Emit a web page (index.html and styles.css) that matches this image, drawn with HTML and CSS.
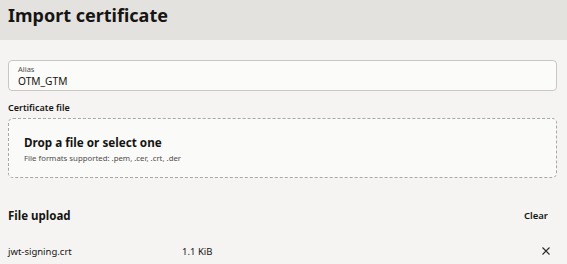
FILE: index.html
```html
<!DOCTYPE html>
<html>
<head>
<meta charset="utf-8">
<link rel="stylesheet" href="styles.css">
</head>
<body>
<header class="header"><h1 class="title">Import certificate</h1></header>
<main class="content">
  <div class="field">
    <div class="field-label">Alias</div>
    <div class="field-value">OTM_GTM</div>
  </div>
  <div class="section-label">Certificate file</div>
  <div class="dropzone">
    <div class="drop-title">Drop a file or select one</div>
    <div class="drop-hint">File formats supported: .pem, .cer, .crt, .der</div>
  </div>
  <div class="upload-head">
    <div class="upload-title">File upload</div>
    <div class="clear">Clear</div>
  </div>
  <div class="file-row">
    <div class="file-name">jwt-signing.crt</div>
    <div class="file-size">1.1 KiB</div>
    <div class="file-remove">
      <svg width="8" height="8" viewBox="0 0 8 8"><path d="M0.5 0.5L7.5 7.5M7.5 0.5L0.5 7.5" stroke="#2a2a2a" stroke-width="1.1" fill="none"/></svg>
    </div>
  </div>
</main>
</body>
</html>
```
FILE: styles.css
```css
html, body { margin: 0; padding: 0; }
body {
  background: #f5f4f2;
  font-family: "Noto Sans", "Open Sans", sans-serif;
  color: #161513;
  width: 567px;
  height: 264px;
  overflow: hidden;
}
.header {
  background: #e4e2df;
  height: 40px;
  padding: 0 8px;
  box-sizing: border-box;
}
.title {
  margin: 0;
  font-size: 18px;
  font-weight: 700;
  line-height: 30px;
}
.content {
  padding: 20px 10px 0 8px;
}
.field {
  height: 31px;
  box-sizing: border-box;
  border: 1px solid #c9c7c4;
  border-radius: 4px;
  background: #fbfbfa;
  padding: 3px 9px 0;
}
.field-label {
  font-size: 7.5px;
  line-height: 10px;
  color: #4f4d4b;
}
.field-value {
  font-size: 10.2px;
  line-height: 14px;
}
.section-label {
  margin-top: 10px;
  font-size: 9px;
  font-weight: 600;
  line-height: 14px;
}
.dropzone {
  margin-top: 3px;
  height: 60px;
  box-sizing: border-box;
  border: 1px dashed #a9a7a4;
  border-radius: 5px;
  background: #fafaf9;
  padding: 14px 0 0 15px;
}
.drop-title {
  font-size: 11.7px;
  font-weight: 700;
  line-height: 18px;
}
.drop-hint {
  margin-top: 2px;
  font-size: 7.8px;
  line-height: 10px;
  color: #4f4d4b;
}
.upload-head {
  margin-top: 28px;
  display: flex;
  justify-content: space-between;
  align-items: center;
  height: 18px;
}
.upload-title {
  font-size: 11.5px;
  font-weight: 700;
}
.clear {
  font-size: 9.5px;
  font-weight: 600;
  margin-right: 9px;
}
.file-row {
  margin-top: 19px;
  display: flex;
  align-items: center;
  height: 16px;
  font-size: 9.5px;
}
.file-name { width: 174px; }
.file-size { flex: 1; }
.file-remove { display: flex; margin-right: 7px; }
```
